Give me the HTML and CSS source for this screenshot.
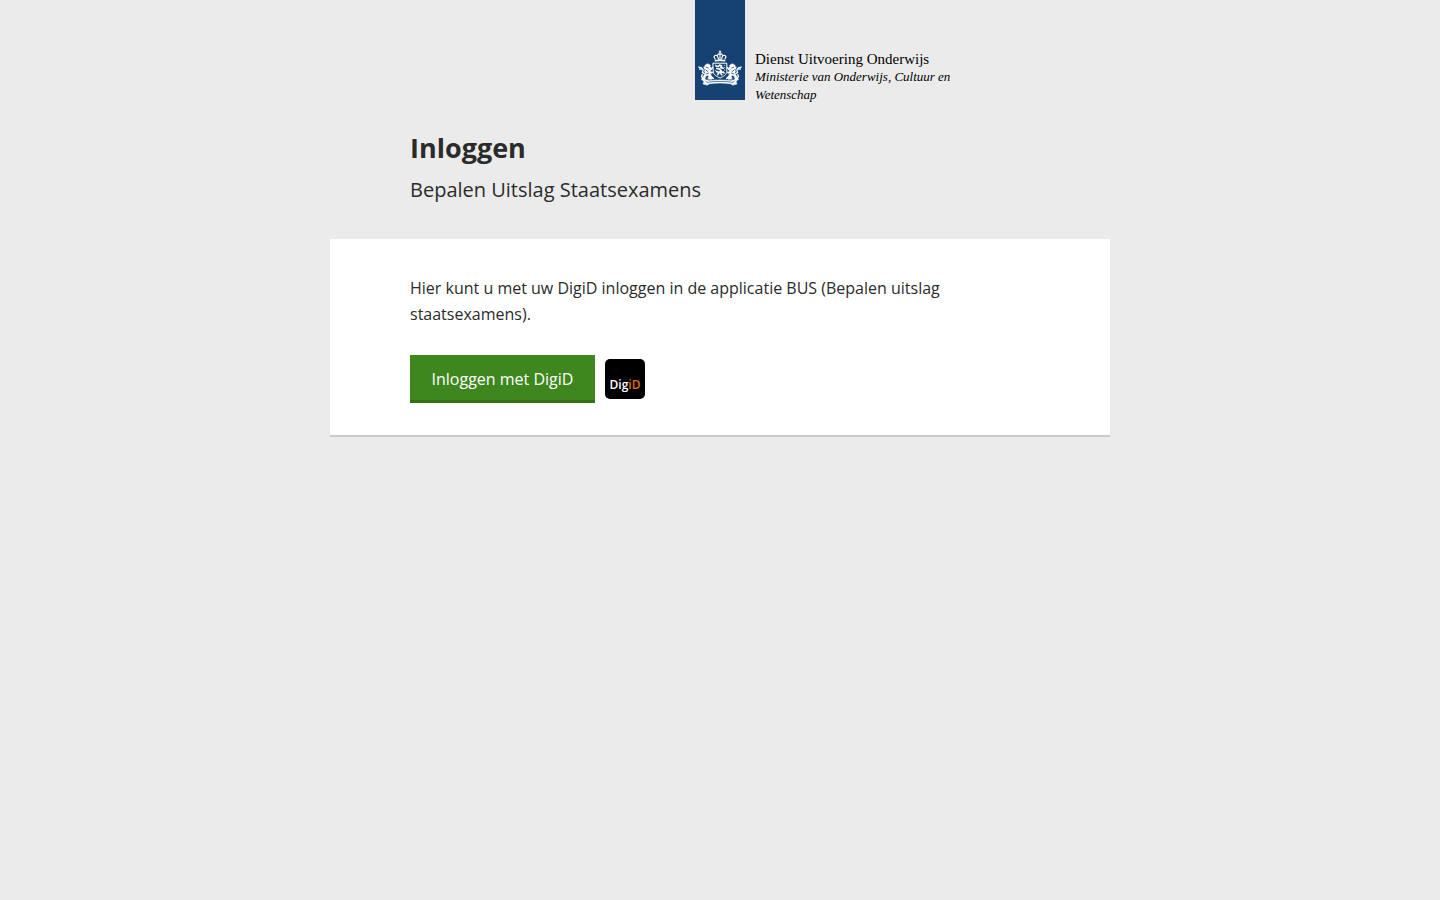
FILE: index.html
```html
<!DOCTYPE html>
<html lang="nl">
<head>
<meta charset="utf-8">
<meta name="viewport" content="width=device-width, initial-scale=1">
<title>Inloggen - Bepalen Uitslag Staatsexamens</title>
<link rel="stylesheet" href="styles.css">
</head>
<body>
<header class="brand">
  <svg class="brand-ribbon" viewBox="0 0 50 100" role="img" aria-label="Rijkswapen">
    <defs>
      <g id="lion" fill="none" stroke="#fff" stroke-linecap="round" stroke-linejoin="round">
        <path stroke-width="1.3" d="M3.8 67.2l2.4.4 1.4 1.8M4.6 69l1.6.1M8.2 69.8l-.8 2.6 2 1.4M7.2 74.5l-.6 2.4 1.8 1"/>
        <path fill="#fff" stroke-width=".5" d="M10.2 65.2l1.8-1.4 2.2.4 1.3 1.5-.6 1.3 1.7.8-.8 1.7-2 .3 2.2 2 2.1.4-1.3 1.2-2.1-.3 1.6 2.1-.1 2.1 1.6.8-.8 1.1-3.6.1-.6-1.4 1.2-1.1-1.5-1.7-1.7 1.3-1 2.2 1 .7-1.7.8-2.5-.2.2-1.5 1.3-.6.5-2.2 2-1.9-1-2.2.2-2.3-1.1-1.3z"/>
        <path stroke-width="1.2" d="M14 71l2.4-1.5 1.2-2M13.4 75.5l3.3 1.2 1.8 1.8"/>
        <path stroke="#154273" stroke-width=".8" d="M11.2 67.2l2 .8M10.8 70l2.2 1.6M11.4 73.8l2-.6"/>
      </g>
    </defs>
    <path fill="#154273" d="M0 0h50v100H0z"/>
    <use href="#lion"/>
    <use href="#lion" transform="matrix(-1 0 0 1 50 0)"/>
    <g fill="none" stroke="#fff" stroke-linecap="round" stroke-linejoin="round">
      <path stroke-width="1.1" d="M25 50.7v3M24.1 52h1.8M20.2 59.2c-2.6-2.7 0-4.8 2-3.4l1.4 3.2M29.8 59.2c2.6-2.7 0-4.8-2-3.4l-1.4 3.2M22.3 55.2c.7-1.8 4.7-1.8 5.4 0M25 54v5"/>
      <path stroke-width="1.7" d="M20.5 60.7c2.7-.7 6.3-.7 9 0"/>
      <path stroke-width="1" d="M18.2 63.2h13.6v8c0 3.6-3.4 5.2-6.8 6.8-3.4-1.6-6.8-3.2-6.8-6.8z"/>
      <path stroke-width="1.6" d="M21 66l2.3.6 1.4-1.5 2 .8-.9 1.7 2.4.6M21.8 68.5l2.7.6 1.8 1.9-2 1.4-2.8-.8M25 72.5l3.2-.5.9 1M23.8 72.7l-1 2M25.5 73l1.3 1.8"/>
      <path stroke-width=".9" d="M20.3 64.9v.1M29.6 65.2v.1M20.3 70.3v.1M29.4 70v.1M29.7 67.5v.1"/>
      <path fill="#fff" stroke-width=".6" d="M8 80.3l4.2-.4 1.6.9c7.4-1.1 15-1.1 22.4 0l1.6-.9 4.2.4-1 1.6 1 2-4.2 1.2-2.5-1.4c-6.8-1-13.8-1-20.6 0l-2.5 1.4L8 83.9l1-2z"/>
      <path stroke="#154273" stroke-width=".7" d="M14 82.1c7.3-.9 14.7-.9 22 0M11 81.5l2.3 1.2M39 81.5l-2.3 1.2"/>
    </g>
  </svg>
  <div class="brand-text">
    <span class="brand-name">Dienst Uitvoering Onderwijs</span>
    <span class="brand-ministry">Ministerie van Onderwijs, Cultuur en<br>Wetenschap</span>
  </div>
</header>
<main class="page">
  <div class="heading">
    <h1 class="title">Inloggen</h1>
    <p class="subtitle">Bepalen Uitslag Staatsexamens</p>
  </div>
  <section class="card">
    <p class="intro">Hier kunt u met uw DigiD inloggen in de applicatie BUS (Bepalen uitslag staatsexamens).</p>
    <div class="actions">
      <button class="login" type="button">Inloggen met DigiD</button>
      <span class="digid">Dig<span class="digid-accent">iD</span></span>
    </div>
  </section>
</main>
</body>
</html>
```
FILE: styles.css
```css
* { box-sizing: border-box; }

body {
  margin: 0;
  background: #ebebeb;
  color: #2b2b2b;
  font-family: "Open Sans", "Noto Sans", sans-serif;
  font-size: 16px;
  line-height: 26px;
}

.brand {
  display: flex;
  align-items: flex-start;
  gap: 10px;
  padding-left: calc(50% - 25px);
}

.brand-ribbon {
  display: block;
  flex: none;
  width: 50px;
}

.brand-text {
  padding-top: 50px;
  color: #000;
  font-family: "Liberation Serif", serif;
  font-size: 15px;
  line-height: 18px;
  white-space: nowrap;
}

.brand-name,
.brand-ministry { display: block; }

.brand-ministry {
  font-size: 13px;
  font-style: italic;
}

.page {
  max-width: 780px;
  margin: 0 auto;
}

.heading { padding: 24px 80px 32px; }

.title {
  margin: 0;
  font-size: 27px;
  line-height: 40px;
}

.subtitle {
  margin: 4px 0 0;
  font-size: 20px;
  line-height: 35px;
}

.card {
  padding: 36px 80px 32px;
  border-bottom: 2px solid #cacaca;
  background: #fff;
}

.intro { margin: 0 0 28px; }

.actions {
  display: flex;
  align-items: center;
  gap: 10px;
}

.login {
  min-width: 185px;
  height: 48px;
  padding: 2px 20px 0;
  border: 0;
  border-bottom: 3px solid #337118;
  background: #3e871e;
  color: #fff;
  font: inherit;
  cursor: pointer;
}

.digid {
  width: 40px;
  height: 40px;
  padding-top: 13px;
  border-radius: 5px;
  background: #000;
  color: #fff;
  font-size: 12px;
  font-weight: 600;
  line-height: 26px;
  text-align: center;
}

.digid-accent { color: #e17000; }
```
